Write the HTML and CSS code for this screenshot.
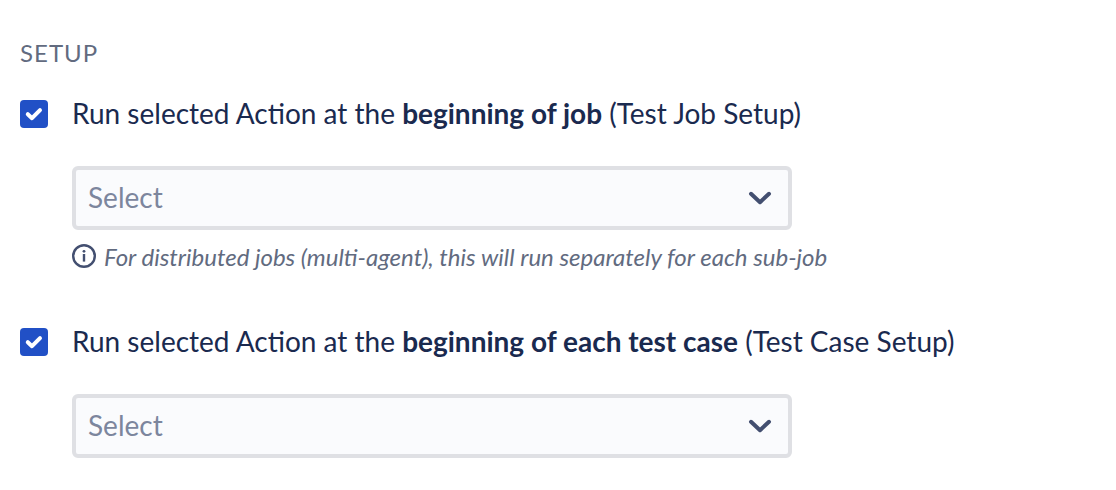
FILE: index.html
```html
<!DOCTYPE html>
<html lang="en">
<head>
    <meta charset="UTF-8">
    <meta name="viewport" content="width=device-width, initial-scale=1.0">
    <title>Job Setup</title>
    <link rel="stylesheet" href="styles.css">
</head>
<body>
    <form class="setup">
        <h2 class="setup-title">SETUP</h2>

        <!-- Test job setup -->
        <div class="setup-option">
            <input type="checkbox" id="jobSetup" class="option-check" checked>
            <div class="option-body">
                <label for="jobSetup" class="option-label">Run selected Action at the <strong>beginning of job</strong> (Test Job Setup)</label>
                <div class="select-box">
                    <select id="jobAction" class="action-select" aria-label="Test Job Setup action">
                        <option value="">Select</option>
                    </select>
                    <svg class="select-arrow" viewBox="0 0 24 16" aria-hidden="true"><path d="M3 3.8l9 8.4 9-8.4"/></svg>
                </div>
                <p class="option-note">
                    <svg class="info-icon" viewBox="0 0 24 24" aria-hidden="true">
                        <circle class="ring" cx="12" cy="12" r="10.8"/>
                        <circle cx="12" cy="7.3" r="1.4"/>
                        <path d="M10.8 10h2.4v7.6h-2.4z"/>
                    </svg>
                    <span>For distributed jobs (multi-agent), this will run separately for each sub-job</span>
                </p>
            </div>
        </div>

        <!-- Test case setup -->
        <div class="setup-option">
            <input type="checkbox" id="caseSetup" class="option-check" checked>
            <div class="option-body">
                <label for="caseSetup" class="option-label">Run selected Action at the <strong>beginning of each test case</strong> (Test Case Setup)</label>
                <div class="select-box">
                    <select id="caseAction" class="action-select" aria-label="Test Case Setup action">
                        <option value="">Select</option>
                    </select>
                    <svg class="select-arrow" viewBox="0 0 24 16" aria-hidden="true"><path d="M3 3.8l9 8.4 9-8.4"/></svg>
                </div>
            </div>
        </div>
    </form>
</body>
</html>
```

FILE: styles.css
```css
* {
    box-sizing: border-box;
}
body {
    margin: 0;
    font-family: Lato, "Liberation Sans", sans-serif;
    font-size: 28px;
    color: #1a2a4f;
    background-color: #fff;
}
.setup {
    padding: 36px 20px 32px;
}
.setup-title {
    margin: 0 0 30px;
    font-size: 24px;
    font-weight: 400;
    line-height: 34px;
    letter-spacing: 1px;
    color: #626b7f;
}
.setup-option {
    display: flex;
    align-items: flex-start;
    gap: 24px;
    margin-bottom: 58px;
}
.setup-option:last-child {
    margin-bottom: 0;
}
.option-check {
    appearance: none;
    flex: none;
    width: 28px;
    height: 28px;
    margin: 0;
    border-radius: 4px;
    background: #2150c6 url("data:image/svg+xml,%3Csvg xmlns='http://www.w3.org/2000/svg' viewBox='0 0 28 28'%3E%3Cpath d='M7.8 14.2l4.2 4 8-8' fill='none' stroke='white' stroke-width='4' stroke-linecap='round' stroke-linejoin='round'/%3E%3C/svg%3E") center / 28px no-repeat;
    cursor: pointer;
}
.option-check:not(:checked) {
    background: #fafbfd;
    border: 4px solid #dfe0e4;
}
.option-body {
    flex: 1;
    min-width: 0;
}
.option-label {
    display: block;
    line-height: 26px;
}
.option-label strong {
    font-weight: 700;
}
.select-box {
    display: grid;
    align-items: center;
    max-width: 720px;
    margin-top: 40px;
}
.action-select {
    grid-area: 1 / 1;
    appearance: none;
    width: 100%;
    height: 64px;
    padding: 0 12px 2px;
    border: 4px solid #dfe0e4;
    border-radius: 6px;
    background-color: #fafbfd;
    font: inherit;
    color: #7c869d;
    cursor: pointer;
}
.select-arrow {
    grid-area: 1 / 1;
    justify-self: end;
    width: 24px;
    height: 16px;
    margin-right: 20px;
    fill: none;
    stroke: #434f70;
    stroke-width: 4;
    stroke-linecap: round;
    stroke-linejoin: round;
    pointer-events: none;
}
.option-note {
    display: flex;
    align-items: flex-start;
    gap: 8px;
    margin: 14px 0 0;
    font-size: 24px;
    font-style: italic;
    line-height: 26px;
    color: #626b7f;
}
.info-icon {
    flex: none;
    width: 24px;
    height: 24px;
    fill: #434f70;
}
.info-icon .ring {
    fill: none;
    stroke: #434f70;
    stroke-width: 2.4;
}
```
